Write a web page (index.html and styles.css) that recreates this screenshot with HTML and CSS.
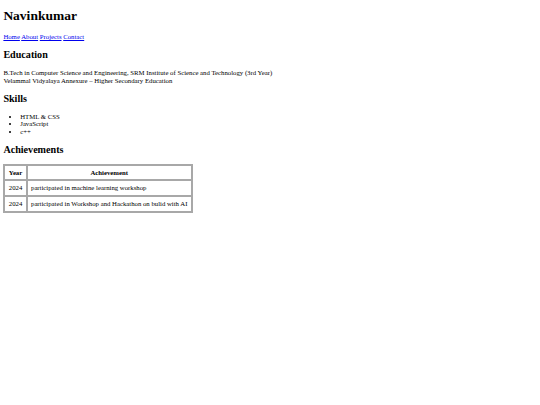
FILE: index.html
```html
<!DOCTYPE html>
<html>
<head>
<meta charset="utf-8">
<title>Navinkumar</title>
<link rel="stylesheet" href="styles.css">
</head>
<body class="page">
<h1 class="title">Navinkumar</h1>
<nav class="nav">
<a href="#home">Home</a>
<a href="#about">About</a>
<a href="#projects">Projects</a>
<a href="#contact">Contact</a>
</nav>
<h2 class="section">Education</h2>
<p class="text">B.Tech in Computer Science and Engineering, SRM Institute of Science and Technology (3rd Year)<br>Velammal Vidyalaya Annexure – Higher Secondary Education</p>
<h2 class="section">Skills</h2>
<ul class="list">
<li>HTML &amp; CSS</li>
<li>JavaScript</li>
<li>c++</li>
</ul>
<h2 class="section">Achievements</h2>
<table class="grid">
<tr><th class="cell">Year</th><th class="cell">Achievement</th></tr>
<tr><td class="cell">2024</td><td class="cell">participated in machine learning workshop</td></tr>
<tr><td class="cell">2024</td><td class="cell">participated in Workshop and Hackathon on bulid with AI</td></tr>
</table>
</body>
</html>
```
FILE: styles.css
```css
.page {
  margin: 3.375px;
  font-family: "Liberation Serif", "Times New Roman", serif;
  font-size: 6.75px;
  line-height: 7.6px;
  color: #000;
  background: #fff;
}
.title {
  font-size: 13.5px;
  line-height: 15.6px;
  margin: 4.3px 0 10.2px;
}
.nav a {
  color: #0000ee;
}
.section {
  font-size: 10.125px;
  line-height: 11.4px;
  margin: 8.4px 0;
}
.text {
  margin: 6.75px 0;
}
.list {
  margin: 6.75px 0;
  padding-left: 16.875px;
}
.grid {
  border-collapse: separate;
  border-spacing: 0.84px;
  border: 1px solid #a8a8a8;
}
.cell {
  padding: 3.05px 3.375px;
  border: 1px solid #a8a8a8;
}
```
